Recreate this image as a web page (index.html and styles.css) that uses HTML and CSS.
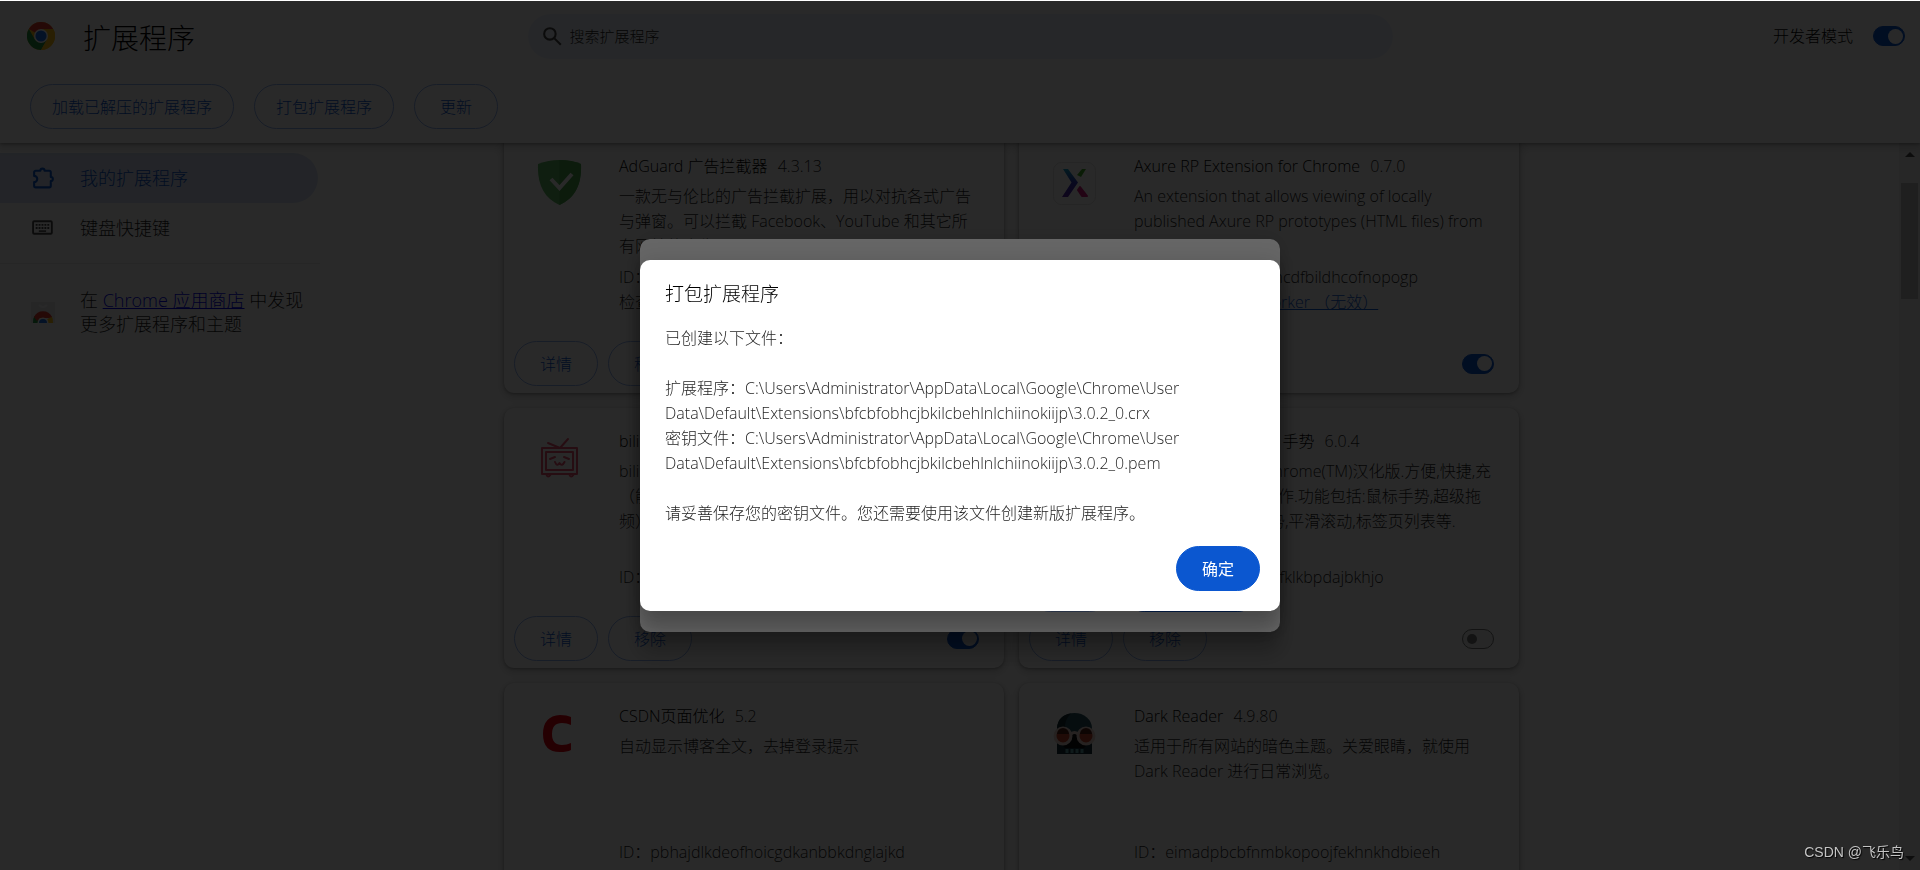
FILE: index.html
```html
<!DOCTYPE html>
<html lang="zh-CN">
<head>
<meta charset="utf-8">
<title>扩展程序</title>
<link rel="stylesheet" href="styles.css">
</head>
<body>
<svg class="sprites" aria-hidden="true">
  <symbol id="chrome" viewBox="0 0 48 48">
    <circle cx="24" cy="24" r="24" fill="#fbc116"/>
    <path d="M24 24 3.2 12A24 24 0 0 1 44.8 12H24z" fill="#e33b2e"/>
    <path d="M3.2 12A24 24 0 0 0 24 48l10.4-18H13.6z" fill="#229342"/>
    <path d="M24 12h20.8A24 24 0 0 1 24 48l10.4-18A12 12 0 0 0 24 12z" fill="#fbc116"/>
    <circle cx="24" cy="24" r="12" fill="#fff"/>
    <circle cx="24" cy="24" r="9.5" fill="#1a73e8"/>
  </symbol>
</svg>

<header class="toolbar">
  <div class="toolbar-main">
    <div class="brand">
      <svg class="brand-logo"><use href="#chrome"/></svg>
      <h1>扩展程序</h1>
    </div>
    <label class="search">
      <svg viewBox="0 0 24 24"><circle cx="9.5" cy="9.5" r="5.5"/><path d="m13.8 13.8 6.2 6.2"/></svg>
      <input type="text" placeholder="搜索扩展程序" aria-label="搜索扩展程序">
    </label>
    <label class="dev-mode">开发者模式 <input class="toggle" type="checkbox" checked></label>
  </div>
  <div class="dev-drawer">
    <button class="pill" type="button">加载已解压的扩展程序</button>
    <button class="pill" type="button">打包扩展程序</button>
    <button class="pill" type="button">更新</button>
  </div>
</header>

<div class="page">
  <nav class="sidebar">
    <a class="nav-item selected" href="#extensions">
      <svg viewBox="0 0 24 24"><path d="M9 4.500a2 2 0 0 1 4 0h4.500A1.500 1.500 0 0 1 19 6v4.500a2 2 0 0 1 0 4V19a1.500 1.500 0 0 1-1.500 1.500h-13A1.500 1.500 0 0 1 3 19v-3.500a3 3 0 0 0 0-6V6a1.500 1.500 0 0 1 1.500-1.500z" fill="none" stroke="currentColor" stroke-width="2" stroke-linejoin="round"/></svg>
      我的扩展程序
    </a>
    <a class="nav-item" href="#shortcuts">
      <svg viewBox="0 0 24 24"><rect x="2" y="5" width="18" height="12" rx="1" fill="none" stroke="#474747" stroke-width="1.800"/><path d="M4.500 8.500h13M4.500 11.500h13" stroke="#474747" stroke-width="1.800" stroke-dasharray="1.800 1"/><path d="M7.500 14.500h7" stroke="#474747" stroke-width="1.500"/></svg>
      键盘快捷键
    </a>
    <div class="store">
      <svg viewBox="0 0 24 21"><path d="M0 0h24v21H0z" fill="#e8eaed"/><path d="M8 3q4 4 8 0" fill="none" stroke="#fff" stroke-width="2"/><path d="M2 21a10 10 0 0 1 1.500-7L12 21z" fill="#229342"/><path d="M22 21a10 10 0 0 0-1.500-7L12 21z" fill="#fbc116"/><path d="M3 15a10 10 0 0 1 18 0l-3 1H9l-3 3z" fill="#e33b2e"/><path d="M6.500 21a5.500 5.500 0 0 1 11 0z" fill="#fff"/><path d="M8 21a4 4 0 0 1 8 0z" fill="#1a73e8"/></svg>
      <p>在 <a href="#store">Chrome 应用商店</a> 中发现<br>更多扩展程序和主题</p>
    </div>
  </nav>

  <main class="cards">
    <article class="card">
      <div class="card-main">
        <svg class="card-icon" viewBox="0 0 45 45"><path d="M1 4Q22-4 44 4C45 24 38 38 22.500 45C7 38 0 24 1 4z" fill="#5fb862"/><path d="M22.500 0Q36 0 44 4C45 24 38 38 22.500 45z" fill="#4ba64f"/><path d="m14 19 8.500 9L35 14" fill="none" stroke="#fff" stroke-width="4"/></svg>
        <div class="card-text">
          <h2>AdGuard 广告拦截器 <span>4.3.13</span></h2>
          <p class="desc">一款无与伦比的广告拦截扩展，用以对抗各式广告与弹窗。可以拦截 Facebook、YouTube 和其它所有网站的广告。</p>
          <p>ID：bgnkhhnnamicmpeenaelnjfhikgbkllg</p>
          <p>检查视图 <a href="#v1">Service Worker</a></p>
        </div>
      </div>
      <div class="card-actions">
        <button class="pill" type="button">详情</button>
        <button class="pill" type="button">移除</button>
        <input class="toggle" type="checkbox" aria-label="启用 AdGuard" checked>
      </div>
    </article>

    <article class="card">
      <div class="card-main">
        <svg class="card-icon" viewBox="0 0 45 45"><defs><linearGradient id="ax" x1="0" y1="0" x2="0" y2="1"><stop offset="0" stop-color="#14a5cc"/><stop offset=".5" stop-color="#3434b8"/><stop offset="1" stop-color="#5b25a8"/></linearGradient></defs><rect x="1.500" y="2.500" width="42" height="42" rx="8" fill="#fff" stroke="#e2e2e2"/><path d="M11 9h5l10 13.500L16 37h-6l9.500-14.500z" fill="url(#ax)"/><path d="M30 9h4L29 17l-4-2z" fill="#43b02a"/><path d="m28 27 7 9h-5l-4-6z" fill="#d31c7c" stroke="#d31c7c" stroke-width="2" stroke-linejoin="round"/></svg>
        <div class="card-text">
          <h2>Axure RP Extension for Chrome <span>0.7.0</span></h2>
          <p class="desc">An extension that allows viewing of locally published Axure RP prototypes (HTML files) from local drives.</p>
          <p>ID：dogkpdfcklifaemcdfbildhcofnopogp</p>
          <p>检查视图 <a href="#v2">Service Worker （无效）</a></p>
        </div>
      </div>
      <div class="card-actions">
        <button class="pill" type="button">详情</button>
        <button class="pill" type="button">移除</button>
        <input class="toggle" type="checkbox" aria-label="启用 Axure RP" checked>
      </div>
    </article>

    <article class="card">
      <div class="card-main">
        <svg class="card-icon" viewBox="0 0 45 45"><g fill="none" stroke="#e8526f" stroke-width="2" stroke-linecap="round" stroke-linejoin="round"><path d="M5 13h35v26H5zM9 17h27v18H9z"/><path d="M11 8l12 5 8-9"/><path d="m13 24 5-2m9 0 5 2M18 27q2 5 4.500 1 2.500 4 5-1"/><path d="M9 39q2 5 5 0m18 0q2 5 5 0"/></g></svg>
        <div class="card-text">
          <h2>bilibili 助手 <span>2.1.0</span></h2>
          <p class="desc">bilibili.com 综合辅助扩展<br>（能够帮助您更好地观看视<br>频）</p>
          <p>ID：kpbnombpnpcffllnianjibmpadjolanh</p>
        </div>
      </div>
      <div class="card-actions">
        <button class="pill" type="button">详情</button>
        <button class="pill" type="button">移除</button>
        <input class="toggle" type="checkbox" aria-label="启用 bilibili 助手" checked>
      </div>
    </article>

    <article class="card">
      <div class="card-main">
        <div class="card-icon"></div>
        <div class="card-text">
          <h2>crxMouse Chrome™ 手势 <span>6.0.4</span></h2>
          <p class="desc">原名:Gestures for Chrome(TM)汉化版.方便,快捷,充<br>分发挥鼠标的所有操作.功能包括:鼠标手势,超级拖<br>曳,滚轮手势,摇杆手势,平滑滚动,标签页列表等.</p>
          <p>ID：jlgkpaicikihijadgifklkbpdajbkhjo</p>
        </div>
      </div>
      <div class="card-actions">
        <button class="pill" type="button">详情</button>
        <button class="pill" type="button">移除</button>
        <input class="toggle" type="checkbox" aria-label="启用 crxMouse">
      </div>
    </article>

    <article class="card">
      <div class="card-main">
        <svg class="card-icon" viewBox="0 0 45 45"><path d="M34 7v8q-4-2-9-2-10 0-10 11t10 11q5 0 9-2v7q-4 2-11 2Q6 42 6 24T23 5q7 0 11 2z" fill="#e60012"/></svg>
        <div class="card-text">
          <h2>CSDN页面优化 <span>5.2</span></h2>
          <p class="desc">自动显示博客全文，去掉登录提示</p>
          <p>ID：pbhajdlkdeofhoicgdkanbbkdnglajkd</p>
        </div>
      </div>
      <div class="card-actions">
        <button class="pill" type="button">详情</button>
        <button class="pill" type="button">移除</button>
        <input class="toggle" type="checkbox" aria-label="启用 CSDN页面优化" checked>
      </div>
    </article>

    <article class="card">
      <div class="card-main">
        <svg class="card-icon" viewBox="0 0 45 45"><path d="M5 18a17.500 15 0 0 1 35 0v26H5z" fill="#27525f"/><path d="M5 18Q6 5 19 3.500 12 10 13 20H5z" fill="#142c36"/><path d="M10 30h25v8H10zM18 22h9l4 14H14z" fill="#0d0f12"/><path d="M5 44V34h4l4 4h19l4-4h4v10z" fill="#17303a"/><path d="M15 39v4m5-4v4m5-4v4m5-4v4" stroke="#5fa3a8" stroke-width="3"/><g stroke="#e9d5cd" stroke-width="3" fill="#c9452b"><circle cx="11" cy="26" r="8"/><circle cx="34" cy="26" r="8"/><path d="M19 24q3.500-3 7 0" fill="none"/></g><path d="M5 24a6 6 0 0 1 12 0zm23 0a6 6 0 0 1 12 0z" fill="#551f18"/></svg>
        <div class="card-text">
          <h2>Dark Reader <span>4.9.80</span></h2>
          <p class="desc">适用于所有网站的暗色主题。关爱眼睛，就使用 Dark Reader 进行日常浏览。</p>
          <p>ID：eimadpbcbfnmbkopoojfekhnkhdbieeh</p>
        </div>
      </div>
      <div class="card-actions">
        <button class="pill" type="button">详情</button>
        <button class="pill" type="button">移除</button>
        <input class="toggle" type="checkbox" aria-label="启用 Dark Reader" checked>
      </div>
    </article>
  </main>

  <div class="scrollbar" aria-hidden="true">
    <span class="arrow up"></span>
    <span class="thumb"></span>
    <span class="arrow down"></span>
  </div>
</div>

<div class="backdrop">
  <section class="dialog pack-form">
    <div class="dialog-actions">
      <button class="pill" type="button">取消</button>
      <button class="pill primary" type="button">打包扩展程序</button>
    </div>
  </section>
</div>

<div class="backdrop">
  <section class="dialog" role="alertdialog" aria-labelledby="pack-title">
    <h2 id="pack-title">打包扩展程序</h2>
    <div class="dialog-body">
      <p>已创建以下文件：</p>
      <p>扩展程序：C:\Users\Administrator\AppData\Local\Google\Chrome\User Data\Default\Extensions\bfcbfobhcjbkilcbehlnlchiinokiijp\3.0.2_0.crx<br>密钥文件：C:\Users\Administrator\AppData\Local\Google\Chrome\User Data\Default\Extensions\bfcbfobhcjbkilcbehlnlchiinokiijp\3.0.2_0.pem</p>
      <p>请妥善保存您的密钥文件。您还需要使用该文件创建新版扩展程序。</p>
    </div>
    <div class="dialog-actions">
      <button class="pill primary" type="button">确定</button>
    </div>
  </section>
</div>

<div class="watermark">CSDN @飞乐鸟</div>
</body>
</html>
```

FILE: styles.css
```css
* { box-sizing: border-box; }

body {
  margin: 0;
  height: 100vh;
  overflow: hidden;
  display: flex;
  flex-direction: column;
  border-top: 1px solid #fff;
  background: #fff;
  color: #000;
  font: 300 16px/25px "Open Sans", "Noto Sans CJK SC", sans-serif;
}

h1, h2, p { margin: 0; font-weight: inherit; }
button, input { font: inherit; color: inherit; }
.sprites { position: absolute; width: 0; height: 0; }

/* Toolbar */
.toolbar {
  position: relative;
  z-index: 1;
  background: #fff;
  box-shadow: 0 1px 3px rgba(0, 0, 0, .3), 0 3px 8px 2px rgba(0, 0, 0, .15);
}
.toolbar-main {
  display: grid;
  grid-template-columns: 1fr 865px 1fr;
  align-items: center;
  height: 70px;
  padding: 0 15px;
}
.brand { display: flex; align-items: center; gap: 28px; padding-left: 12px; }
.brand-logo { width: 28px; height: 28px; }
.brand h1 { padding-top: 3px; font-size: 28px; line-height: 36px; }
.search {
  display: flex;
  align-items: center;
  gap: 5px;
  height: 45px;
  padding: 0 12px;
  border-radius: 23px;
  background: #edf2fa;
}
.search svg { width: 25px; height: 25px; fill: none; stroke: #474747; stroke-width: 2; }
.search input {
  flex: 1;
  border: 0;
  padding: 0;
  background: none;
  font-size: 15px;
  outline: 0;
}
.search input::placeholder { color: #1f1f1f; opacity: 1; }
.dev-mode { display: flex; align-items: center; justify-content: flex-end; gap: 20px; }
.dev-drawer { display: flex; gap: 20px; padding: 13px 30px 14px; }

.pill {
  height: 45px;
  min-width: 84px;
  padding: 2px 20px 0;
  border: 1px solid #92b2f0;
  border-radius: 23px;
  background: none;
  color: #0b57d0;
  white-space: nowrap;
}
.dev-drawer .pill { padding: 2px 21px 0; }
.pill.primary { border-color: #0b57d0; background: #0b57d0; color: #fff; font-weight: 400; }

.toggle {
  appearance: none;
  flex: none;
  display: flex;
  align-items: center;
  width: 32px;
  height: 20px;
  margin: 0;
  padding: 0 4px;
  border: 1px solid #747775;
  border-radius: 10px;
  background: #f0f0f0;
}
.toggle::before {
  content: "";
  width: 10px;
  height: 10px;
  border-radius: 50%;
  background: #747775;
}
.toggle:checked {
  justify-content: flex-end;
  padding: 0 1px;
  border-color: #0b57d0;
  background: #0b57d0;
}
.toggle:checked::before { width: 15px; height: 15px; background: #fff; }

/* Page */
.page { flex: 1; min-height: 0; display: flex; }
.sidebar { flex: none; width: 320px; padding-top: 10px; font-size: 18px; }
.nav-item {
  display: flex;
  align-items: center;
  gap: 24px;
  height: 50px;
  margin-right: 2px;
  padding-left: 31px;
  border-radius: 0 25px 25px 0;
  color: #1f1f1f;
  text-decoration: none;
}
.nav-item svg { width: 25px; height: 25px; }
.nav-item.selected { background: #d7e1f4; color: #0b57d0; }
.store {
  display: flex;
  align-items: center;
  gap: 25px;
  margin-top: 10px;
  padding: 24px 0 0 31px;
  border-top: 1px solid #ececec;
  color: #1f1f1f;
  line-height: 24px;
}
.store svg { width: 24px; height: 21px; }
.store a { color: #0000ee; }

.cards {
  flex: 1;
  display: grid;
  grid-template-columns: repeat(auto-fill, 500px);
  grid-auto-rows: 260px;
  gap: 15px;
  overflow: hidden;
  margin-top: -10px;
  padding-left: 184px;
}
.card {
  display: flex;
  flex-direction: column;
  border-radius: 10px;
  background: #fff;
  box-shadow: 0 1px 3px rgba(0, 0, 0, .3), 0 3px 8px 2px rgba(0, 0, 0, .15);
}
.card-main {
  flex: 1;
  display: flex;
  gap: 37px;
  padding: 21px 23px 26px 33px;
}
.card-icon { flex: none; width: 45px; height: 45px; margin-top: 6px; }
.card-text { flex: 1; display: flex; flex-direction: column; color: #1f1f1f; }
.card-text h2 { margin-bottom: 5px; font-size: 16px; color: #000; }
.card-text h2 span { margin-left: 6px; color: #1f1f1f; }
.card-text .desc { flex: 1; }
.card-text a { color: #0b57d0; }
.card-actions {
  display: flex;
  align-items: center;
  gap: 10px;
  padding: 0 25px 7px 10px;
}
.card-actions .toggle { margin-left: auto; }

.scrollbar {
  flex: none;
  display: flex;
  flex-direction: column;
  align-items: center;
  width: 21px;
  padding: 9px 0;
  background: #f1f1f1;
}
.arrow { border: 5px solid transparent; }
.arrow.up { border-top: 0; border-bottom-color: #505050; }
.arrow.down { margin-top: auto; border-bottom: 0; border-top-color: #505050; }
.thumb { width: 17px; height: 116px; margin-top: 26px; background: #c1c1c1; }

/* Dialogs */
.backdrop {
  position: fixed;
  z-index: 2;
  inset: 1px 0 0;
  display: flex;
  align-items: center;
  justify-content: center;
  background: rgba(0, 0, 0, .6);
}
.dialog {
  display: flex;
  flex-direction: column;
  width: 640px;
  padding: 20px 20px 20px 25px;
  border-radius: 10px;
  background: #fff;
  box-shadow: 0 0 20px rgba(0, 0, 0, .12), 0 20px 20px rgba(0, 0, 0, .24);
}
.dialog h2 { font-size: 19px; line-height: 28px; }
.dialog-body {
  display: flex;
  flex-direction: column;
  gap: 25px;
  padding: 18px 50px 20px 0;
  color: #1f1f1f;
}
.dialog-actions { display: flex; justify-content: flex-end; gap: 10px; }
.pack-form { height: 393px; justify-content: flex-end; }

.watermark {
  position: fixed;
  z-index: 3;
  right: 16px;
  bottom: 8px;
  color: #c4c4c4;
  font: 14px/20px "Liberation Sans", "Noto Sans CJK SC", sans-serif;
  text-shadow: 1px 1px 1px #000;
}
```
